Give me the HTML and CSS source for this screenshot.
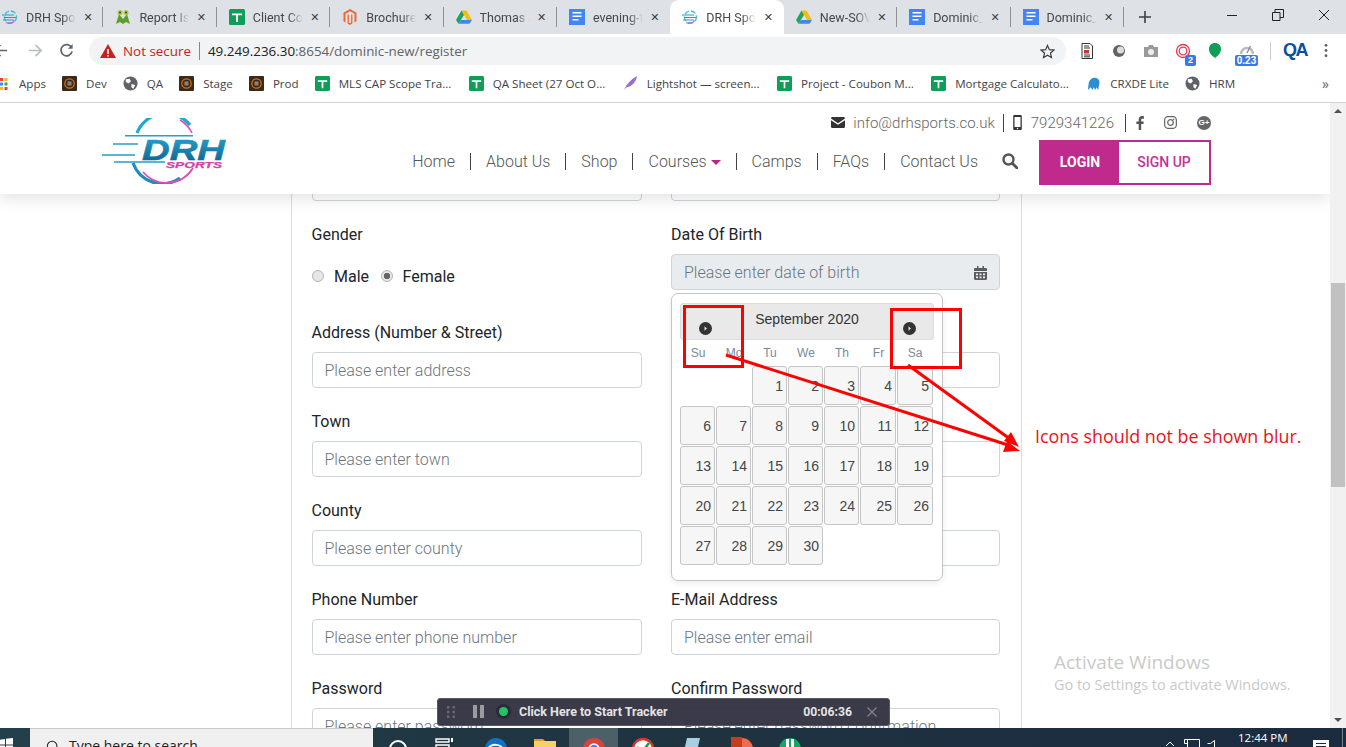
FILE: index.html
```html
<!DOCTYPE html>
<html lang="en">
<head>
<meta charset="utf-8">
<title>DRH Sports - Register</title>
<link rel="stylesheet" href="styles.css">
</head>
<body>
<svg class="defs" width="0" height="0" aria-hidden="true">
  <defs>
    <symbol id="i-sheet" viewBox="0 0 16 16"><rect width="16" height="16" y="0" rx="1.500" fill="#0f9d58"/><path d="M3 4.500h10v1.800H8.900V13H7.100V6.300H3z" fill="#fff"/></symbol>
    <symbol id="i-doc" viewBox="0 0 16 16"><rect width="16" height="19" y="-1.500" rx="2" fill="#4285f4"/><path d="M3.500 3h9v1.600h-9zM3.500 6.500h9v1.600h-9zM3.500 10h6v1.600h-6z" fill="#fff"/></symbol>
    <symbol id="i-drive" viewBox="0 0 16 16"><path d="M5.500 1.500h5L16 11h-5z" fill="#fbbc05"/><path d="M5.500 1.500 0 11l2.500 3.800L8 6z" fill="#1ea362"/><path d="M2.500 14.800h11L16 11H5z" fill="#4285f4"/></symbol>
    <symbol id="i-magento" viewBox="0 0 16 16"><path d="M8 0 1.500 3.700v8.600l2 1.100V4.800L8 2.200l4.500 2.600v8.600l2-1.100V3.700zM8 16l-2.400-1.400V5.900l1.300-.7v8.500l1.100.6 1.100-.6V5.200l1.300.7v8.700z" fill="#ee672f"/></symbol>
    <symbol id="i-drh" viewBox="0 0 16 16"><circle cx="8.500" cy="8" r="6" fill="none" stroke="#46b9d8" stroke-width="1.300" stroke-dasharray="5 2"/><path d="M0 6h12M2 8.500h12M1 11h11" stroke="#1aa0c8" stroke-width="1.200"/><path d="M4 13.500c3 1.500 6 1 8-1" fill="none" stroke="#d65ac0" stroke-width="1.200"/></symbol>
    <symbol id="i-report" viewBox="0 0 16 16"><path d="M1 15 4 5l4 5 4-5 3 10-4-2-3 2-3-2z" fill="#5aa02c"/><circle cx="5" cy="3.500" r="2.500" fill="#a8c93a"/><circle cx="11" cy="3.500" r="2.500" fill="#a8c93a"/><circle cx="5" cy="3.500" r="1" fill="#5a2a6a"/><circle cx="11" cy="3.500" r="1" fill="#5a2a6a"/></symbol>
    <symbol id="i-dev" viewBox="0 0 16 16"><rect width="16" height="16" rx="1" fill="#3a2a1a"/><circle cx="8" cy="8" r="5" fill="none" stroke="#d8701c" stroke-width="1.300"/><rect x="5.800" y="5.800" width="4.400" height="4.400" fill="#8a8078"/></symbol>
    <symbol id="i-globe" viewBox="0 0 16 16"><circle cx="8" cy="8" r="7.500" fill="#5f6368"/><path d="M3 3.500 7 3l1.500 2.500L6 8 3 6.500zM9 8.500l4 1-2 4-2-1.500z" fill="#fff"/></symbol>
  </defs>
</svg>
<div class="screen">
  <div class="tabstrip">
    <div class="tab"><svg class="fav"><use href="#i-drh"/></svg><span class="tab-title">DRH Spor</span><span class="tab-x">✕</span></div>
    <div class="tab"><svg class="fav"><use href="#i-report"/></svg><span class="tab-title">Report Iss</span><span class="tab-x">✕</span></div>
    <div class="tab"><svg class="fav"><use href="#i-sheet"/></svg><span class="tab-title">Client Con</span><span class="tab-x">✕</span></div>
    <div class="tab"><svg class="fav"><use href="#i-magento"/></svg><span class="tab-title">Brochure</span><span class="tab-x">✕</span></div>
    <div class="tab"><svg class="fav"><use href="#i-drive"/></svg><span class="tab-title">Thomas A</span><span class="tab-x">✕</span></div>
    <div class="tab tab-before-active"><svg class="fav"><use href="#i-doc"/></svg><span class="tab-title">evening-t</span><span class="tab-x">✕</span></div>
    <div class="tab tab-active"><svg class="fav"><use href="#i-drh"/></svg><span class="tab-title">DRH Spo</span><span class="tab-x">✕</span></div>
    <div class="tab"><svg class="fav"><use href="#i-drive"/></svg><span class="tab-title">New-SOV</span><span class="tab-x">✕</span></div>
    <div class="tab"><svg class="fav"><use href="#i-doc"/></svg><span class="tab-title">Dominic_</span><span class="tab-x">✕</span></div>
    <div class="tab"><svg class="fav"><use href="#i-doc"/></svg><span class="tab-title">Dominic_</span><span class="tab-x">✕</span></div>
    <svg class="newtab" viewBox="0 0 12 12"><path d="M6 0v12M0 6h12" stroke="#3c4043" stroke-width="1.600"/></svg>
    <div class="winctl">
      <svg viewBox="0 0 12 12"><path d="M1 6.500h10" stroke="#222" stroke-width="1"/></svg>
      <svg viewBox="0 0 12 12"><path d="M.5 3.500h7.500v8H.5zM3 3.500V.5h8.500v8H8" fill="none" stroke="#222"/></svg>
      <svg viewBox="0 0 12 12"><path d="M1 1l10 10M11 1 1 11" stroke="#222"/></svg>
    </div>
  </div>

  <div class="toolbar">
    <svg class="tb-back" viewBox="0 0 16 16"><path d="M15 8H2M8 2 2 8l6 6" fill="none" stroke="#5f6368" stroke-width="1.800"/></svg>
    <svg class="tb-fwd" viewBox="0 0 16 16"><path d="M1 8h13M8 2l6 6-6 6" fill="none" stroke="#b9bbbe" stroke-width="1.800"/></svg>
    <svg class="tb-reload" viewBox="0 0 16 16"><path d="M13.500 5A6 6 0 1 0 14 9" fill="none" stroke="#5f6368" stroke-width="1.800"/><path d="M14.500 1v5h-5z" fill="#5f6368"/></svg>
    <div class="omnibox">
      <svg class="warn" viewBox="0 0 16 14"><path d="M8 0 16 14H0z" fill="#c5221f"/><path d="M7.200 5h1.600v5H7.200zM7.200 11h1.600v1.600H7.200z" fill="#fff"/></svg>
      <span class="notsecure">Not secure</span>
      <span class="omni-sep"></span>
      <span class="url"><b>49.249.236.30</b>:8654/dominic-new/register</span>
      <svg class="star" viewBox="0 0 16 16"><path d="M8 1.500 10 6l4.800.500-3.600 3.200 1 4.800L8 12l-4.200 2.500 1-4.800L1.200 6.500 6 6z" fill="none" stroke="#3c4043" stroke-width="1.300"/></svg>
    </div>
    <div class="exts">
      <svg class="ext" viewBox="0 0 16 16"><path d="M3 .5h8l2.500 2.500v12.500H3z" fill="#fff" stroke="#333"/><path d="M5 3h5M5 5h6M5 12h6M5 13.800h6" stroke="#333"/><rect x="5" y="7" width="5" height="3.500" fill="#c33"/></svg>
      <svg class="ext" viewBox="0 0 16 16"><circle cx="8" cy="8" r="6" fill="#5f6368"/><circle cx="9.500" cy="7" r="3.500" fill="#ddd"/></svg>
      <svg class="ext" viewBox="0 0 16 16"><path d="M1 4h4l1-2h4l1 2h4v10H1z" fill="#9a9a9a"/><circle cx="8" cy="9" r="3" fill="#eee"/></svg>
      <span class="ext ext-badge-wrap"><svg viewBox="0 0 16 16"><circle cx="8" cy="8" r="6.500" fill="none" stroke="#e8394a" stroke-width="1.300"/><circle cx="8" cy="8" r="3.800" fill="none" stroke="#e8394a" stroke-width="1.300"/></svg><span class="badge badge-num">2</span></span>
      <svg class="ext" viewBox="0 0 16 16"><path d="M8 0c3.800 0 6 2.600 6 6 0 4-3 6.500-5.500 8.500L8 16l-.3-1.500C4.500 12.500 2 10 2 6c0-3.400 2.200-6 6-6z" fill="#0f9d58"/></svg>
      <span class="ext ext-badge-wrap"><svg viewBox="0 0 16 16"><path d="M2 11a6 6 0 1 1 12 0" fill="none" stroke="#bbb" stroke-width="2.500"/><path d="M8 10 11.500 3" stroke="#888" stroke-width="1.200"/></svg><span class="badge badge-wide">0.23</span></span>
      <span class="ext-sep"></span>
      <span class="qa">QA</span>
      <svg class="dots" viewBox="0 0 4 16"><circle cx="2" cy="2.500" r="1.500" fill="#5f6368"/><circle cx="2" cy="8" r="1.500" fill="#5f6368"/><circle cx="2" cy="13.500" r="1.500" fill="#5f6368"/></svg>
    </div>
  </div>

  <div class="bookmarks">
    <span class="bm bm-apps"><svg viewBox="0 0 9 14" class="apps-ic"><rect y="1" width="3" height="3" fill="#ea4335"/><rect x="4.500" y="1" width="3" height="3" fill="#fbbc05"/><rect y="5.500" width="3" height="3" fill="#4285f4"/><rect x="4.500" y="5.500" width="3" height="3" fill="#34a853"/><rect y="10" width="3" height="3" fill="#fbbc05"/><rect x="4.500" y="10" width="3" height="3" fill="#ea4335"/></svg>Apps</span>
    <span class="bm"><svg class="fav"><use href="#i-dev"/></svg>Dev</span>
    <span class="bm"><svg class="fav"><use href="#i-globe"/></svg>QA</span>
    <span class="bm"><svg class="fav"><use href="#i-dev"/></svg>Stage</span>
    <span class="bm"><svg class="fav"><use href="#i-dev"/></svg>Prod</span>
    <span class="bm bm-long"><svg class="fav"><use href="#i-sheet"/></svg>MLS CAP Scope Tra...</span>
    <span class="bm bm-long"><svg class="fav"><use href="#i-sheet"/></svg>QA Sheet (27 Oct O...</span>
    <span class="bm bm-long"><svg class="fav" viewBox="0 0 16 16"><path d="M1 15C4 8 9 3 15 0c-1 6-5 11-11 12z" fill="#9a6fd0"/></svg>Lightshot — screen...</span>
    <span class="bm bm-long"><svg class="fav"><use href="#i-sheet"/></svg>Project - Coubon M...</span>
    <span class="bm bm-long"><svg class="fav"><use href="#i-sheet"/></svg>Mortgage Calculato...</span>
    <span class="bm"><svg class="fav" viewBox="0 0 16 16"><path d="M2 15 3 7c1-4 5-6 8-5 3 1 4 4 3 7l-1 6-2-3-1 3-2-3-1 3-2-3z" fill="#2a8fd0"/></svg>CRXDE Lite</span>
    <span class="bm"><svg class="fav"><use href="#i-globe"/></svg>HRM</span>
    <span class="bm-more">»</span>
  </div>

  <div class="viewport">
    <div class="page">
      <header class="site-header">
        <svg class="logo" viewBox="0 0 126 66" role="img" aria-label="DRH Sports logo">
          <defs>
            <linearGradient id="drhg" x1="0" y1="0" x2="0" y2="1"><stop offset="0" stop-color="#27a5d0"/><stop offset="1" stop-color="#0c5f8a"/></linearGradient>
          </defs>
          <path d="M37 15A31 31 0 0 1 90 7" fill="none" stroke="#20a8d0" stroke-width="3.200"/>
          <path d="M80 2A31 31 0 0 1 92 15" fill="none" stroke="#d94fb8" stroke-width="1.500"/>
          <path d="M33 45A31 31 0 0 0 80 60" fill="none" stroke="#1d8fb5" stroke-width="3.200"/>
          <path d="M43 54A31 31 0 0 0 93 50" fill="none" stroke="#d94fb8" stroke-width="1.800"/>
          <path d="M25 17.700h68M13 26h25M2 37h33M14 44h51" stroke="#2a9cc6" stroke-width="1.500"/>
          <text class="logo-drh" x="42" y="42" textLength="83" lengthAdjust="spacingAndGlyphs" fill="url(#drhg)">DRH</text>
          <text class="logo-sports" x="66" y="50" textLength="56" lengthAdjust="spacingAndGlyphs">SPORTS</text>
        </svg>
        <div class="header-right">
          <div class="contact-row">
            <svg class="ci ci-mail" viewBox="0 0 14 11"><path d="M0 1.500C0 .7.600 0 1.400 0h11.200C13.400 0 14 .7 14 1.500L7 6.200zM0 3.200 7 7.800l7-4.600v6.300c0 .8-.6 1.500-1.400 1.500H1.400C.6 11 0 10.300 0 9.500z" fill="#333"/></svg>
            <span class="contact-text">info@drhsports.co.uk</span>
            <span class="vsep vsep-c"></span>
            <svg class="ci ci-phone" viewBox="0 0 8 14"><path d="M1.200 0h5.600C7.500 0 8 .5 8 1.200v11.600c0 .7-.5 1.200-1.200 1.200H1.200C.5 14 0 13.500 0 12.800V1.200C0 .5.500 0 1.200 0zM1.200 1.800v9.400h5.600V1.800zM4 11.800a.7.700 0 1 0 0 1.400.7.700 0 0 0 0-1.400z" fill="#333"/></svg>
            <span class="contact-text">7929341226</span>
            <span class="vsep vsep-c vsep-c2"></span>
            <svg class="ci ci-fb" viewBox="0 0 8 14"><path d="M5.200 14V8h2.200l.4-2.500H5.200V4c0-.8.300-1.300 1.400-1.300h1.300V.3C7.600.2 6.900.1 6 .1 4 .1 2.700 1.300 2.700 3.500v2H.4V8h2.300v6z" fill="#555"/></svg>
            <svg class="ci ci-ig" viewBox="0 0 14 14"><rect x=".7" y=".7" width="12.600" height="12.600" rx="3.500" fill="none" stroke="#666" stroke-width="1.300"/><circle cx="7" cy="7" r="3" fill="none" stroke="#666" stroke-width="1.300"/><circle cx="10.600" cy="3.400" r=".8" fill="#666"/></svg>
            <span class="ci-gplus">G+</span>
          </div>
          <div class="nav-row">
            <nav class="nav">
              <a class="nav-item">Home</a>
              <a class="nav-item">About Us</a>
              <a class="nav-item">Shop</a>
              <a class="nav-item nav-courses">Courses<span class="caret"></span></a>
              <a class="nav-item">Camps</a>
              <a class="nav-item">FAQs</a>
              <a class="nav-item">Contact Us</a>
            </nav>
            <svg class="search" viewBox="0 0 16 16"><circle cx="6.500" cy="6.500" r="5" fill="none" stroke="#555" stroke-width="2.400"/><path d="M10.500 10.500 15 15" stroke="#555" stroke-width="2.800" stroke-linecap="round"/></svg>
            <div class="auth">
              <span class="btn-login">LOGIN</span>
              <span class="btn-signup">SIGN UP</span>
            </div>
          </div>
        </div>
      </header>

      <main class="panel">
        <form class="form">
          <div class="field"><label class="lbl"></label><input class="inp" type="text"></div>
          <div class="field"><label class="lbl"></label><input class="inp" type="text"></div>

          <div class="field field-tall">
            <label class="lbl">Gender</label>
            <div class="radios">
              <input class="radio" type="radio" name="g">
              <span class="radio-lbl">Male</span>
              <input class="radio" type="radio" name="g" checked>
              <span class="radio-lbl">Female</span>
            </div>
          </div>
          <div class="field field-tall">
            <label class="lbl">Date Of Birth</label>
            <div class="date-wrap">
              <input class="inp inp-date" type="text" placeholder="Please enter date of birth">
              <svg class="cal-ic" viewBox="0 0 13 14"><path d="M3 0h1.500v2H8.500V0H10v2h1.800c.7 0 1.200.5 1.200 1.200V5H0V3.200C0 2.500.5 2 1.200 2H3zM0 6h13v6.800c0 .7-.5 1.200-1.200 1.200H1.200C.5 14 0 13.500 0 12.800zM2 7.500v1.800h2V7.500zm3.500 0v1.800h2V7.500zm3.500 0v1.800h2V7.500zM2 10.500v1.800h2v-1.800zm3.500 0v1.800h2v-1.800zm3.500 0v1.800h2v-1.800z" fill="#5c5c5c"/></svg>
            </div>
          </div>

          <div class="field"><label class="lbl">Address (Number &amp; Street)</label><input class="inp" type="text" placeholder="Please enter address"></div>
          <div class="field"><label class="lbl"></label><input class="inp" type="text"></div>

          <div class="field"><label class="lbl">Town</label><input class="inp" type="text" placeholder="Please enter town"></div>
          <div class="field"><label class="lbl"></label><input class="inp" type="text"></div>

          <div class="field"><label class="lbl">County</label><input class="inp" type="text" placeholder="Please enter county"></div>
          <div class="field"><label class="lbl"></label><input class="inp" type="text"></div>

          <div class="field"><label class="lbl">Phone Number</label><input class="inp" type="text" placeholder="Please enter phone number"></div>
          <div class="field"><label class="lbl">E-Mail Address</label><input class="inp" type="text" placeholder="Please enter email"></div>

          <div class="field"><label class="lbl">Password</label><input class="inp" type="text" placeholder="Please enter password"></div>
          <div class="field"><label class="lbl">Confirm Password</label><input class="inp" type="text" placeholder="Please enter password confirmation"></div>
        </form>
      </main>

      <div class="activate">
        <div class="activate-title">Activate Windows</div>
        <div class="activate-sub">Go to Settings to activate Windows.</div>
      </div>
    </div>
    <div class="scrollbar">
      <span class="sb-up"></span>
      <span class="sb-thumb"></span>
      <span class="sb-down"></span>
    </div>
  </div>

  <div class="taskbar">
    <svg class="start" viewBox="0 0 14 14"><path d="M0 2 6 1v5.500H0zM7 .8 14 0v6.500H7zM0 7.500h6V13l-6-1zM7 7.500h7V14l-7-1z" fill="#fff"/></svg>
    <div class="tb-search">
      <svg class="tb-search-ic" viewBox="0 0 16 16"><circle cx="7" cy="7" r="5.500" fill="none" stroke="#222" stroke-width="1.200"/><path d="M3 11l-3 4" stroke="#222"/></svg>
      <span class="tb-search-text">Type here to search</span>
    </div>
    <div class="tb-apps">
      <span class="tb-slot"><svg class="tb-ic" viewBox="0 0 24 24"><circle cx="12" cy="12" r="8" fill="none" stroke="#fff" stroke-width="2"/></svg></span>
      <span class="tb-slot"><svg class="tb-ic" viewBox="0 0 24 24"><path d="M1 2h13v3H1zM1 8h13v10H1z" fill="none" stroke="#fff" stroke-width="1.400"/><path d="M17 1v4" stroke="#fff" stroke-width="2"/></svg></span>
      <span class="tb-slot"><svg class="tb-ic" viewBox="0 0 24 24"><circle cx="12" cy="12" r="11" fill="#0f72c6"/><path d="M4 13C5 6 19 6 19 14H9c1 3 6 3 9 1" fill="none" stroke="#fff" stroke-width="2"/></svg></span>
      <span class="tb-slot"><svg class="tb-ic" viewBox="0 0 24 24"><path d="M1 2h9l2 2h-11z" fill="#d9a520"/><rect x="1" y="4" width="22" height="18" fill="#f4d264"/></svg></span>
      <span class="tb-slot tb-slot-active"><svg class="tb-ic" viewBox="0 0 24 24"><circle cx="12" cy="12" r="11" fill="#db4437"/><path d="M2 16 12 12l10 0-4 10H8z" fill="#fbc02d"/><circle cx="12" cy="12" r="5" fill="#4285f4" stroke="#fff" stroke-width="1.500"/></svg></span>
      <span class="tb-slot"><svg class="tb-ic" viewBox="0 0 24 24"><circle cx="12" cy="12" r="10" fill="#fff" stroke="#d8352a" stroke-width="2.500"/><path d="M6 10l5 5 7-9" fill="none" stroke="#1a9c4a" stroke-width="2.500"/></svg></span>
      <span class="tb-slot"><svg class="tb-ic" viewBox="0 0 24 24"><path d="M7 1h13l-5 22H2z" fill="#a8cfe0"/></svg></span>
      <span class="tb-slot"><svg class="tb-ic" viewBox="0 0 24 24"><circle cx="13" cy="12" r="11" fill="#ef6c4d"/><rect x="2" y="0" width="11" height="24" fill="#c43e1c"/></svg></span>
      <span class="tb-slot"><svg class="tb-ic" viewBox="0 0 24 24"><circle cx="12" cy="12" r="11" fill="#16a565"/><path d="M8 2h3v9H8zM13 2h3v9h-3z" fill="#fff"/></svg></span>
    </div>
    <div class="tray">
      <svg class="tray-ic" viewBox="0 0 10 6"><path d="M1 5l4-4 4 4" fill="none" stroke="#fff"/></svg>
      <svg class="tray-net" viewBox="0 0 16 12"><path d="M3.500.5h12v10h-12zM.5.5h3v4h-3z" fill="none" stroke="#fff"/></svg>
      <svg class="tray-vol" viewBox="0 0 12 12"><path d="M.5 4.500h3l4-3v10" fill="none" stroke="#fff"/></svg>
      <span class="tray-time">12:44 PM</span>
      <svg class="tray-note" viewBox="0 0 16 12"><path d="M0 0h16v12H0z" fill="#fff"/><path d="M3 3.500h10M3 6.500h10" stroke="#1c2c40"/></svg>
      <span class="tray-end"></span>
    </div>
  </div>

  <div class="datepicker">
    <div class="dp-head">
      <svg class="dp-nav" viewBox="0 0 13 13"><circle cx="6.500" cy="6.500" r="6.500" fill="#333"/><path d="M5.500 4.200 8 6.500 5.500 8.800z" fill="#ddd"/></svg>
      <span class="dp-title">September 2020</span>
      <svg class="dp-nav" viewBox="0 0 13 13"><circle cx="6.500" cy="6.500" r="6.500" fill="#333"/><path d="M5.500 4.200 8 6.500 5.500 8.800z" fill="#ddd"/></svg>
    </div>
    <div class="dp-dow"><span>Su</span><span>Mo</span><span>Tu</span><span>We</span><span>Th</span><span>Fr</span><span>Sa</span></div>
    <div class="dp-grid">
      <span class="dp-blank"></span><span class="dp-blank"></span>
      <span class="dp-day">1</span><span class="dp-day">2</span><span class="dp-day">3</span><span class="dp-day">4</span><span class="dp-day">5</span>
      <span class="dp-day">6</span><span class="dp-day">7</span><span class="dp-day">8</span><span class="dp-day">9</span><span class="dp-day">10</span><span class="dp-day">11</span><span class="dp-day">12</span>
      <span class="dp-day">13</span><span class="dp-day">14</span><span class="dp-day">15</span><span class="dp-day">16</span><span class="dp-day">17</span><span class="dp-day">18</span><span class="dp-day">19</span>
      <span class="dp-day">20</span><span class="dp-day">21</span><span class="dp-day">22</span><span class="dp-day">23</span><span class="dp-day">24</span><span class="dp-day">25</span><span class="dp-day">26</span>
      <span class="dp-day">27</span><span class="dp-day">28</span><span class="dp-day">29</span><span class="dp-day">30</span>
    </div>
  </div>

  <svg class="markup" viewBox="0 0 1346 747" aria-hidden="true">
    <rect x="684.500" y="306.500" width="58" height="60" fill="none" stroke="#f00" stroke-width="3"/>
    <rect x="891.500" y="309.500" width="69" height="58" fill="none" stroke="#f00" stroke-width="3"/>
    <path d="M726 355 1008 445M908 365 1010 439" stroke="#f00" stroke-width="3"/>
    <path d="M1020 451 1007 441 1003 452zM1019 447 1011 432 1004 441z" fill="#f00"/>
  </svg>
  <div class="markup-note">Icons should not be shown blur.</div>

  <div class="tracker">
    <svg class="tr-grip" viewBox="0 0 10 14"><path d="M1 1h2.500v2.500H1zM6.500 1H9v2.500H6.500zM1 5.800h2.500v2.500H1zM6.500 5.800H9v2.500H6.500zM1 10.500h2.500V13H1zM6.500 10.500H9V13H6.500z" fill="#66666f"/></svg>
    <svg class="tr-pause" viewBox="0 0 11 13"><path d="M0 0h4v13H0zM7 0h4v13H7z" fill="#9a9aa0"/></svg>
    <span class="tr-dot"></span>
    <span class="tr-text">Click Here to Start Tracker</span>
    <span class="tr-time">00:06:36</span>
    <svg class="tr-x" viewBox="0 0 10 10"><path d="M.5.5l9 9M9.500.5l-9 9" stroke="#85858c" stroke-width="1.200"/></svg>
  </div>
</div>
</body>
</html>
```

FILE: styles.css
```css
* { box-sizing: border-box; }
html, body { margin: 0; padding: 0; overflow: hidden; }
body { font-family: "Open Sans", "Noto Sans", sans-serif; background: #fff; }
.defs { position: absolute; }
.screen { position: relative; width: 1346px; height: 747px; overflow: hidden; display: flex; flex-direction: column; }

/* Tab strip */
.tabstrip { height: 34px; flex: none; background: #dee1e6; display: flex; align-items: stretch; margin-left: -10px; width: 1356px; }
.tab { width: 113.4px; flex: none; display: flex; align-items: center; padding-left: 12px; position: relative; color: #45474b; font: 12.5px Roboto, sans-serif; }
.tab::after { content: ""; position: absolute; right: 0; top: 7px; height: 20px; width: 1px; background: #8f9296; }
.tab-before-active::after { display: none; }
.tab-active { background: #fff; border-radius: 9px 9px 0 0; }
.tab-active::after { display: none; }
.fav { width: 16px; height: 16px; flex: none; }
.tab-title { width: 50px; margin-left: 8px; white-space: nowrap; overflow: hidden; -webkit-mask-image: linear-gradient(90deg, #000 72%, transparent); mask-image: linear-gradient(90deg, #000 72%, transparent); }
.tab-x { margin-left: 6px; font: 700 11px "DejaVu Sans", sans-serif; color: #3c3e42; width: 12px; text-align: center; }
.newtab { width: 12px; height: 12px; margin: 11px 0 0 15px; flex: none; }
.winctl { margin-left: auto; display: flex; gap: 34px; padding: 9px 16px 0 0; }
.winctl svg { width: 12px; height: 12px; }

/* Toolbar */
.toolbar { height: 33px; flex: none; background: #fff; display: flex; align-items: center; position: relative; }
.tb-back { width: 15px; height: 15px; margin-left: -7px; flex: none; }
.tb-fwd { width: 15px; height: 15px; margin-left: 20px; flex: none; }
.tb-reload { width: 15px; height: 15px; margin-left: 16px; flex: none; }
.omnibox { margin-left: 15px; width: 977px; height: 28px; margin-top: 1px; background: #f1f3f4; border-radius: 14px; display: flex; align-items: center; padding-left: 11px; flex: none; font-size: 13.4px; }
.warn { width: 16px; height: 14px; flex: none; }
.notsecure { color: #c5221f; margin-left: 7px; }
.omni-sep { width: 1px; height: 18px; background: #888; margin: 0 8px 0 8px; }
.url { color: #5f6368; white-space: nowrap; }
.url b { color: #202124; font-weight: 400; }
.star { width: 15px; height: 15px; margin-left: auto; margin-right: 11px; flex: none; }
.exts { display: flex; align-items: center; position: absolute; left: 0; top: 0; height: 33px; width: 1346px; pointer-events: none; padding-left: 1079px; }
.ext { width: 16px; height: 16px; flex: none; margin-right: 16px; position: relative; display: block; }
.ext svg { width: 16px; height: 16px; display: block; }
.badge { position: absolute; background: #3b78e7; color: #fff; font-size: 9px; font-weight: 700; border-radius: 2px; line-height: 11px; text-align: center; bottom: -7px; font-family: "Liberation Sans", sans-serif; }
.badge-num { width: 11px; right: -5px; }
.badge-wide { width: 23px; left: -4px; font-size: 10px; }
.ext-sep { width: 1px; height: 18px; background: #ccc; margin-left: -1px; margin-right: 12px; flex: none; }
.qa { color: #0b4f9e; font-weight: 700; font-size: 18px; letter-spacing: -1.500px; width: 22px; margin-right: 19px; flex: none; font-family: "Liberation Sans", sans-serif; }
.dots { width: 4px; height: 15px; flex: none; }

/* Bookmarks */
.bookmarks { height: 36px; flex: none; background: #fff; border-bottom: 1px solid #d3d3d3; padding-bottom: 2px; display: flex; align-items: center; font-size: 11.6px; color: #3f4246; white-space: nowrap; position: relative; }
.bm { display: flex; align-items: center; gap: 9px; margin-right: 16px; flex: none; }
.bm-long { margin-right: 17.4px; }
.bm .fav { width: 15px; height: 15px; }
.apps-ic { width: 9px; height: 14px; flex: none; margin-right: 1px; }
.bm-more { position: absolute; right: 17px; color: #5f6368; font-size: 14px; top: 7px; }

/* Page */
.viewport { flex: 1; display: flex; min-height: 0; }
.page { flex: 1; min-width: 0; position: relative; overflow: hidden; background: #fff; }
.site-header { position: relative; z-index: 2; height: 91px; background: #fff; box-shadow: 0 4px 16px rgba(0, 0, 0, .12); display: flex; }
.logo { width: 126px; height: 66px; margin: 15px 0 0 100px; flex: none; }
.logo-drh { font: italic 700 29px "Liberation Sans", sans-serif; stroke: url(#drhg); stroke-width: .6px; }
.logo-sports { font: italic 700 8.500px "Liberation Sans", sans-serif; fill: #d33fae; stroke: #d33fae; stroke-width: .25px; }
.header-right { margin-left: auto; padding-right: 119px; display: flex; flex-direction: column; align-items: flex-end; }
.contact-row { display: flex; align-items: center; height: 37px; padding-top: 2px; color: #666; font: 300 15px Roboto, sans-serif; }
.contact-text { white-space: nowrap; }
.ci { flex: none; }
.ci-mail { width: 14px; height: 11px; margin-right: 8px; }
.ci-phone { width: 9px; height: 15px; margin-right: 9px; }
.ci-fb { width: 8px; height: 14px; margin-right: 20px; }
.ci-ig { width: 13px; height: 13px; margin-right: 20px; }
.ci-gplus { width: 14px; height: 14px; border-radius: 50%; background: #666; color: #fff; font: 700 8px/14px "Liberation Sans", sans-serif; text-align: center; }
.vsep { width: 1px; background: #444; flex: none; }
.vsep-c { height: 18px; margin: 0 9px 0 8px; }
.vsep-c2 { margin: 0 10px 0 11px; }
.nav-row { display: flex; align-items: flex-start; height: 45px; }
.nav { display: flex; align-items: center; height: 40px; margin-top: 1px; font: 300 16px Roboto, sans-serif; color: #555; }
.nav-item { padding: 0 15px; display: flex; align-items: center; height: 17px; border-left: 1px solid #444; white-space: nowrap; }
.nav-item:first-child { border-left: 0; }
.caret { width: 0; height: 0; margin-left: 4px; margin-top: 2px; border-style: solid; border-width: 5px 5px 0; border-color: #b8268a transparent transparent; }
.search { width: 16px; height: 16px; margin: 13px 21px 0 9px; flex: none; }
.auth { display: flex; width: 172px; height: 45px; border: 2px solid #bf2a8c; font: 700 14px Roboto, sans-serif; }
.btn-login { width: 78px; background: #bf2a8c; color: #fff; display: flex; align-items: center; justify-content: center; padding-bottom: 2px; }
.btn-signup { flex: 1; background: #fff; color: #c8309a; display: flex; align-items: center; justify-content: center; font-weight: 500; padding-bottom: 2px; }

.panel { margin: -61px 0 0 291px; width: 731px; height: 720px; border-left: 1px solid #dedede; border-right: 1px solid #dedede; padding-left: 19.5px; }
.form { display: grid; grid-template-columns: 330px 329px; column-gap: 29.5px; row-gap: 21px; font-family: Roboto, sans-serif; }
.field { display: flex; flex-direction: column; }
.field-tall { margin-bottom: 9px; }
.lbl { height: 24px; margin-bottom: 8px; font-size: 16px; line-height: 26px; color: #212529; }
.inp { width: 100%; height: 36px; border: 1px solid #ced4da; border-radius: 4px; padding: 0 12px; font: 300 16px Roboto, sans-serif; background: #fff; color: #495057; outline: 0; display: block; }
.inp::placeholder { color: #6c757d; opacity: 1; }
.inp-date { background: #e9ecef; }
.date-wrap { position: relative; }
.cal-ic { position: absolute; right: 13px; top: 12px; width: 13px; height: 14px; }
.radios { display: flex; align-items: center; height: 36px; padding-top: 8px; font-size: 16px; color: #212529; }
.radio { -webkit-appearance: none; appearance: none; width: 12px; height: 12px; margin: 0 0 0 .5px; flex: none; border: 1px solid #b4b4b4; border-radius: 50%; background: #e6e6e6; }
.radio:checked { background: radial-gradient(circle, #666 0 3px, #e6e6e6 3.400px); }
.radio-lbl { margin: 0 11px 0 10px; }

.activate { position: absolute; z-index: 1; left: 1054px; top: 546px; color: #c9c9c9; font-family: "Open Sans", sans-serif; white-space: nowrap; }
.activate-title { font-size: 19px; line-height: 26px; }
.activate-sub { font-size: 14.450px; line-height: 20px; }

.scrollbar { width: 16px; flex: none; background: #f1f1f1; position: relative; display: flex; flex-direction: column; align-items: center; }
.sb-up { width: 0; height: 0; margin-top: 6px; border-style: solid; border-width: 0 4px 4px; border-color: transparent transparent #505050; }
.sb-thumb { width: 14px; height: 204px; background: #c1c1c1; margin-top: 170px; }
.sb-down { width: 0; height: 0; margin-top: auto; margin-bottom: 6px; border-style: solid; border-width: 4px 4px 0; border-color: #505050 transparent transparent; }

/* Taskbar */
.taskbar { height: 19px; flex: none; background: linear-gradient(90deg, #23404a, #1f3440 45%, #1c2b40); display: flex; position: relative; z-index: 3; overflow: hidden; }
.start { width: 14px; height: 14px; margin: 10px 16px 0 -1px; flex: none; }
.tb-search { width: 343px; flex: none; margin-left: 1px; background: #f0f0f0; border-top: 1px solid #c8c8c8; display: flex; padding-left: 16px; height: 30px; }
.tb-search-ic { width: 14px; height: 14px; margin-top: 11px; flex: none; }
.tb-search-text { font-size: 14px; line-height: 30px; margin-left: 9px; color: #222; padding-top: 2px; white-space: nowrap; }
.tb-apps { display: flex; }
.tb-slot { width: 49px; height: 19px; display: flex; justify-content: center; padding-top: 9px; flex: none; }
.tb-slot-active { background: #4d6068; }
.tb-ic { width: 24px; height: 24px; flex: none; }
.tray { margin-left: auto; display: flex; color: #fff; }
.tray-ic { width: 10px; height: 6px; margin-top: 13px; flex: none; }
.tray-net { width: 16px; height: 12px; margin: 11px 0 0 9px; flex: none; }
.tray-vol { width: 12px; height: 12px; margin: 11px 0 0 7px; flex: none; }
.tray-time { font-size: 11.500px; line-height: 19px; margin-left: 19px; width: 56px; white-space: nowrap; }
.tray-note { width: 16px; height: 12px; margin: 12px 0 0 19px; flex: none; }
.tray-end { width: 1px; height: 19px; background: #77818b; margin: 0 3px 0 13px; flex: none; }

/* Overlays */
.datepicker { position: absolute; z-index: 4; left: 671px; top: 293px; width: 272px; height: 288px; background: #fff; border: 1px solid #c5c5c5; border-radius: 7px; padding: 9px 8px 0; box-shadow: 0 2px 6px rgba(0, 0, 0, .08); font-family: "Liberation Sans", Arial, sans-serif; }
.dp-head { height: 37px; background: #e9e9e9; border: 1px solid #ddd; border-radius: 3px; display: flex; align-items: flex-start; justify-content: space-between; padding: 17px 17px 0 18px; position: relative; }
.dp-nav { width: 13px; height: 13px; flex: none; margin-top: 1px; }
.dp-title { position: absolute; left: 0; right: 0; top: 7px; text-align: center; font-size: 14px; color: #333; }
.dp-dow { display: grid; grid-template-columns: repeat(5, 36px) 37px 36px; height: 26px; line-height: 27px; text-align: center; font-size: 12px; color: #78899c; }
.dp-grid { display: grid; grid-template-columns: repeat(5, 35px) 36px 36px; grid-auto-rows: 39px; gap: 1px; }
.dp-day { background: #f6f6f6; border: 1px solid #c5c5c5; border-radius: 3px; font-size: 14px; color: #454545; text-align: right; padding: 11px 3px 0 0; line-height: 16px; }

.markup { position: absolute; z-index: 5; left: 0; top: 0; width: 1346px; height: 747px; pointer-events: none; }
.markup-note { position: absolute; z-index: 5; left: 1035px; top: 424px; font: 17.900px/24px "Open Sans", sans-serif; color: #e8121c; white-space: nowrap; }

.tracker { position: absolute; z-index: 6; left: 437px; top: 698px; width: 453px; height: 28px; background: rgba(50, 50, 66, .96); border: 1px solid #565664; border-radius: 3px; display: flex; align-items: center; color: #e4e4e4; font: 700 12.500px Roboto, sans-serif; padding: 0 0 1px 8px; }
.tr-grip { width: 10px; height: 14px; flex: none; }
.tr-pause { width: 11px; height: 13px; margin-left: 17px; flex: none; }
.tr-dot { width: 9px; height: 9px; background: #27c166; border-radius: 50%; margin-left: 15px; box-shadow: 0 0 0 3px #2a2a38; flex: none; }
.tr-text { margin-left: 11px; white-space: nowrap; }
.tr-time { margin-left: auto; white-space: nowrap; font-size: 12.200px; }
.tr-x { width: 10px; height: 10px; margin: 0 12px 0 15px; flex: none; }
```
